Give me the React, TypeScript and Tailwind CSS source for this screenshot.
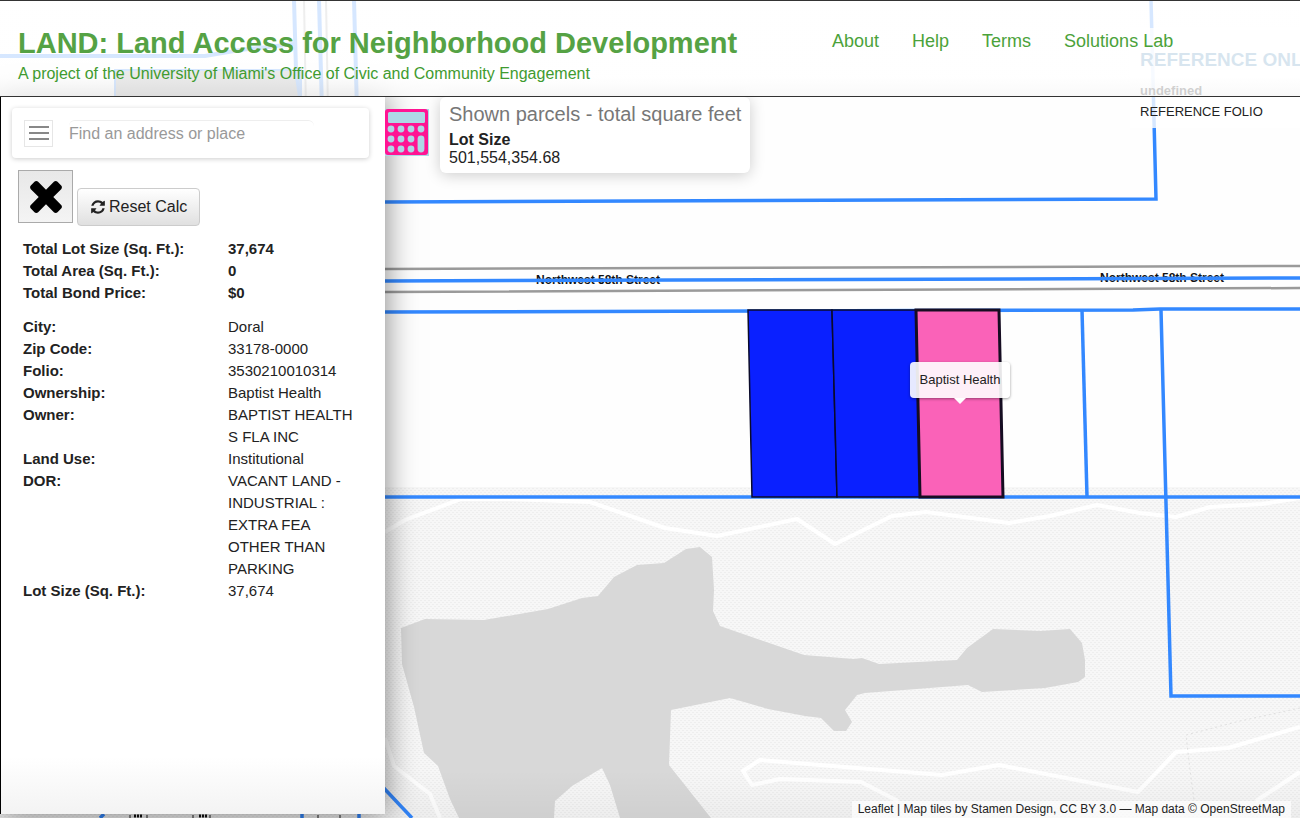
import type { ReactNode } from "react";

const navLinks = ["About", "Help", "Terms", "Solutions Lab"];

const totals = [
  { label: "Total Lot Size (Sq. Ft.):", value: "37,674" },
  { label: "Total Area (Sq. Ft.):", value: "0" },
  { label: "Total Bond Price:", value: "$0" },
];

const details = [
  { label: "City:", value: "Doral" },
  { label: "Zip Code:", value: "33178-0000" },
  { label: "Folio:", value: "3530210010314" },
  { label: "Ownership:", value: "Baptist Health" },
  { label: "Owner:", value: "BAPTIST HEALTH S FLA INC" },
  { label: "Land Use:", value: "Institutional" },
  {
    label: "DOR:",
    value: "VACANT LAND - INDUSTRIAL : EXTRA FEA OTHER THAN PARKING",
  },
  { label: "Lot Size (Sq. Ft.):", value: "37,674" },
];

function StreetLabel({ x, y }: { x: number; y: number }) {
  return (
    <text x={x} y={y} fontSize="12" fontWeight="bold" fill="#111">
      Northwest 58th Street
    </text>
  );
}

function ParcelMap() {
  return (
    <svg
      className="absolute inset-0 h-full w-full"
      viewBox="0 0 1300 818"
      preserveAspectRatio="xMidYMid slice"
      aria-label="Parcel map"
    >
      <defs>
        <pattern id="halftone" width="4" height="4" patternUnits="userSpaceOnUse">
          <rect width="4" height="4" fill="#f7f7f7" />
          <rect x="0" y="0" width="2" height="1" fill="#eeeeee" />
          <rect x="2" y="2" width="2" height="1" fill="#eeeeee" />
        </pattern>
        <linearGradient id="floor" x1="0" y1="0" x2="0" y2="1">
          <stop offset="0" stopColor="#000" stopOpacity="0" />
          <stop offset="1" stopColor="#000" stopOpacity="0.04" />
        </linearGradient>
      </defs>

      <rect width="1300" height="818" fill="#fefefe" />
      <rect y="487" width="1300" height="331" fill="url(#halftone)" />

      {/* buildings and streets behind the header */}
      <path d="M115 70H301V110H115Z" fill="#9a9a9a" />
      <g fill="none" stroke="#aaa" strokeWidth="2">
        <path d="M304 0L306 110" />
        <path d="M326 0L328 110" />
      </g>
      <g fill="none" stroke="#3388ff" strokeWidth="4">
        <path d="M0 56H205L240 50L294 44" />
        <path d="M115 110V70H301V110" strokeWidth="2" />
        <path d="M294 0L296 70L302 110" />
        <path d="M319 0L322 110" />
        <path d="M354 0L357 110" />
      </g>

      {/* lake */}
      <path
        d="M401 628L425 619L484 620L548 609L582 598L598 596L614 577L637 565L664 563L686 549L700 547L712 557L714 590L713 611L720 626L804 655L854 659L862 658L879 664L957 660L967 648L993 629L1040 631L1070 629L1082 643L1085 660L1085 677L1078 682L1045 688L982 692L968 685L865 693L857 695L845 710L852 722L846 731L834 731L821 718L805 716L768 709L730 698L671 710L669 765L711 818H620L610 785L602 768L572 786L555 801L554 818H459L450 799L438 766L424 753L414 707L402 664Z"
        fill="#d8d8d8"
      />

      {/* footpaths */}
      <g fill="none" stroke="#fff" strokeWidth="4" strokeLinejoin="round">
        <path d="M385 532L405 520L461 499L510 499L590 502L665 528L717 536L797 519L835 544L892 516L926 512L1009 523L1050 516L1097 505L1140 513L1176 517L1210 507L1262 504L1300 498" />
        <path d="M385 738L394 766L430 794L440 818" />
        <path d="M898 801L861 782L780 779L752 785L743 771L760 760L942 775L999 765L1138 792L1176 752L1228 748L1300 727" />
        <path d="M1256 801L1300 772" />
      </g>
      <path
        d="M1300 708L1240 721L1186 735L1190 770L1194 800"
        fill="none"
        stroke="#e0e0e0"
        strokeDasharray="2 3"
      />

      {/* street */}
      <path d="M385 269L1300 266M385 292L1300 288" fill="none" stroke="#9a9a9a" strokeWidth="2.5" />
      <StreetLabel x={536} y={284} />
      <StreetLabel x={1100} y={282} />

      {/* parcel boundaries */}
      <g fill="none" stroke="#3388ff" strokeWidth="3.5">
        <path d="M385 202L1156 199L1151 0" />
        <path d="M385 281L1300 278" />
        <path d="M385 312L1133 310L1160 309L1300 309" />
        <path d="M0 497H1300" />
        <path d="M1082 310L1087 497" />
        <path d="M1161 310L1171 696H1300" />
        <path d="M380 784L412 818" />
        <path d="M100 818L104 814M302 814V818M359 814V818" />
      </g>
      <g fill="#0a20ff" stroke="#0b0b2a" strokeWidth="1.5">
        <path d="M748 310H832L837 497H752Z" />
        <path d="M832 310H916L920 497H837Z" />
      </g>
      <path
        d="M916 310H999L1003 497H920Z"
        fill="#fa62b8"
        stroke="#160d22"
        strokeWidth="3"
      />

      <path
        d="M130 815V818M147 815V818M193 815V818M210 815V818M318 815V818M340 815V818"
        stroke="#888"
        strokeWidth="2"
      />
      <path d="M134 816H143M199 816H208" stroke="#111" strokeWidth="3" strokeDasharray="2 1" />
      <rect y="770" width="1300" height="48" fill="url(#floor)" />
    </svg>
  );
}

function Tooltip({ children }: { children: ReactNode }) {
  return (
    <div className="absolute left-[910px] top-[362px] w-[100px] rounded bg-white/90 py-2 text-center text-[13px] leading-5 text-[#222] shadow-[0_1px_3px_rgba(0,0,0,0.4)]">
      {children}
      <span className="absolute left-1/2 top-full -ml-1.5 border-x-6 border-t-6 border-x-transparent border-t-white" />
    </div>
  );
}

function ReferencePopup() {
  return (
    <div className="absolute right-0 top-7 h-[100px] w-[170px] overflow-hidden whitespace-nowrap bg-white/80 pl-[10px] pt-5">
      <h2 className="text-[19px] font-bold leading-6 text-[#3a7fb0]">REFERENCE ONLY</h2>
      <p className="mt-2 text-[13px] font-bold leading-[22px] text-[#222]">undefined</p>
      <p className="text-[13px] leading-5 text-[#222]">REFERENCE FOLIO</p>
    </div>
  );
}

function Header() {
  return (
    <header className="relative flex h-[97px] items-start border-b border-t border-[#333] bg-linear-to-b from-white/80 from-80% to-[#f8f8f8]/80">
      <div className="w-[814px] shrink-0 whitespace-nowrap pl-[18px] pt-6 text-[#3f9b30]">
        <h1 className="text-[29px] font-bold leading-9 text-[#55a244]">
          LAND: Land Access for Neighborhood Development
        </h1>
        <p className="mt-0.5 text-base leading-[22px]">
          A project of the University of Miami's Office of Civic and Community Engagement
        </p>
      </div>
      <nav className="ml-[18px] mt-7 flex gap-[33px] text-lg leading-6 text-[#4ba23a]">
        {navLinks.map((link) => (
          <a key={link} href="#" className="whitespace-nowrap">
            {link}
          </a>
        ))}
      </nav>
    </header>
  );
}

function SearchBox() {
  return (
    <form className="mr-4 flex h-[50px] items-center rounded bg-white pl-3 shadow-[0_1px_5px_rgba(0,0,0,0.2)]">
      <button
        type="button"
        aria-label="Menu"
        className="flex h-[27px] w-[29px] items-center justify-center border border-[#e6e6e6]"
      >
        <svg viewBox="0 0 20 14" className="h-3.5 w-5" stroke="#888" strokeWidth="2">
          <path d="M0 1H20M0 7H20M0 13H20" />
        </svg>
      </button>
      <input
        type="text"
        aria-label="Find an address or place"
        placeholder="Find an address or place"
        className="ml-4 h-[26px] w-[245px] rounded-md border-t border-[#eee] text-base text-[#444] outline-none placeholder:text-[#999]"
      />
    </form>
  );
}

function CloseIcon() {
  return (
    <svg viewBox="0 64 1792 1792" className="size-12 shrink-0" fill="#000">
      <path d="M1490 1322q0 40-28 68l-136 136q-28 28-68 28t-68-28l-294-294-294 294q-28 28-68 28t-68-28l-136-136q-28-28-28-68t28-68l294-294-294-294q-28-28-28-68t28-68l136-136q28-28 68-28t68 28l294 294 294-294q28-28 68-28t68 28l136 136q28 28 28 68t-28 68l-294 294 294 294q28 28 28 68z" />
    </svg>
  );
}

function RefreshIcon() {
  return (
    <svg viewBox="0 0 1792 1792" className="size-4 shrink-0" fill="#222">
      <path d="M1639 1056q0 5-1 7-64 268-268 434.5t-478 166.5q-146 0-282.5-55t-243.5-157l-129 129q-19 19-45 19t-45-19-19-45v-448q0-26 19-45t45-19h448q26 0 45 19t19 45-19 45l-137 137q71 66 161 102t187 36q134 0 250-65t186-179q11-17 53-117 8-23 30-23h192q13 0 22.5 9.5t9.5 22.5zm25-800v448q0 26-19 45t-45 19h-448q-26 0-45-19t-19-45 19-45l138-138q-148-137-349-137-134 0-250 65t-186 179q-11 17-53 117-8 23-30 23h-199q-13 0-22.5-9.5t-9.5-22.5v-7q65-268 270-434.5t480-166.5q146 0 284 55.5t245 156.5l130-129q19-19 45-19t45 19 19 45z" />
    </svg>
  );
}

function ParcelTable({ rows, bold }: { rows: typeof details; bold?: boolean }) {
  return (
    <table className="w-full table-fixed text-left text-[15px] leading-[22px] text-[#222]">
      <tbody>
        {rows.map((row) => (
          <tr key={row.label} className="align-top">
            <th scope="row" className="w-[205px] font-bold">
              {row.label}
            </th>
            <td className={bold ? "font-bold" : ""}>{row.value}</td>
          </tr>
        ))}
      </tbody>
    </table>
  );
}

function Sidebar() {
  return (
    <aside className="mb-1 w-[385px] shrink-0 border-l border-black bg-linear-to-b from-white from-92% to-[#f3f3f3] pl-[11px] pt-[11px] shadow-[0_0_30px_rgba(0,0,0,0.5)]">
      <SearchBox />
      <div className="ml-1.5 mt-3 flex items-start gap-1">
        <button
          type="button"
          aria-label="Close"
          className="flex h-[53px] w-[55px] items-center justify-center border border-[#aaa] bg-linear-to-b from-[#e8e8e8] to-[#f4f4f4]"
        >
          <CloseIcon />
        </button>
        <button
          type="button"
          className="mt-[18px] flex h-[38px] items-center gap-[3px] rounded border border-[#ccc] bg-linear-to-b from-white to-[#e0e0e0] px-3 text-base text-[#222]"
        >
          <RefreshIcon />
          Reset Calc
        </button>
      </div>
      <div className="ml-[11px] mr-5 mt-3 flex flex-col gap-3">
        <ParcelTable rows={totals} bold />
        <ParcelTable rows={details} />
      </div>
    </aside>
  );
}

function CalculatorIcon() {
  const keys = [
    [6, 20], [16, 20], [26, 20], [36, 20],
    [6, 30], [16, 30], [26, 30],
    [6, 40], [16, 40], [26, 40],
  ];
  return (
    <svg viewBox="0 0 44 47" className="h-[47px] w-11">
      <rect width="44" height="47" fill="#add8e6" />
      <rect width="43" height="46" rx="3" fill="#ff1493" />
      <rect x="3" y="3" width="37" height="11" rx="1.5" fill="#add8e6" />
      {keys.map(([cx, cy]) => (
        <circle key={`${cx}-${cy}`} cx={cx} cy={cy} r="3.4" fill="#add8e6" />
      ))}
      <rect x="32.6" y="26.6" width="6.8" height="16.8" rx="3.4" fill="#add8e6" />
    </svg>
  );
}

function ParcelSummary() {
  return (
    <section className="h-[76px] rounded-md bg-white px-[9px] pt-1 text-[#222] shadow-[0_2px_15px_rgba(0,0,0,0.2)]">
      <h2 className="text-xl leading-[26px] text-[#777]">Shown parcels - total square feet</h2>
      <div className="mt-1 text-base leading-[18px]">
        <p className="font-bold">Lot Size</p>
        <p>501,554,354.68</p>
      </div>
    </section>
  );
}

export default function App() {
  return (
    <div className="relative h-screen overflow-hidden bg-white font-['Liberation_Sans',Arial,sans-serif]">
      <ParcelMap />
      <Tooltip>Baptist Health</Tooltip>
      <ReferencePopup />

      <div className="relative flex h-full flex-col">
        <Header />
        <main className="flex min-h-0 flex-1">
          <Sidebar />
          <div className="flex min-w-0 flex-1 flex-col justify-between">
            <div className="flex items-start gap-[11px]">
              <button type="button" aria-label="Calculator" className="mt-3">
                <CalculatorIcon />
              </button>
              <ParcelSummary />
            </div>
            <footer className="mr-[9px] self-end bg-white/70 px-1.5 text-xs leading-[17px] text-[#222]">
              <a href="#">Leaflet</a> | Map tiles by <a href="#">Stamen Design</a>,{" "}
              <a href="#">CC BY 3.0</a> — Map data © <a href="#">OpenStreetMap</a>
            </footer>
          </div>
        </main>
      </div>
    </div>
  );
}
